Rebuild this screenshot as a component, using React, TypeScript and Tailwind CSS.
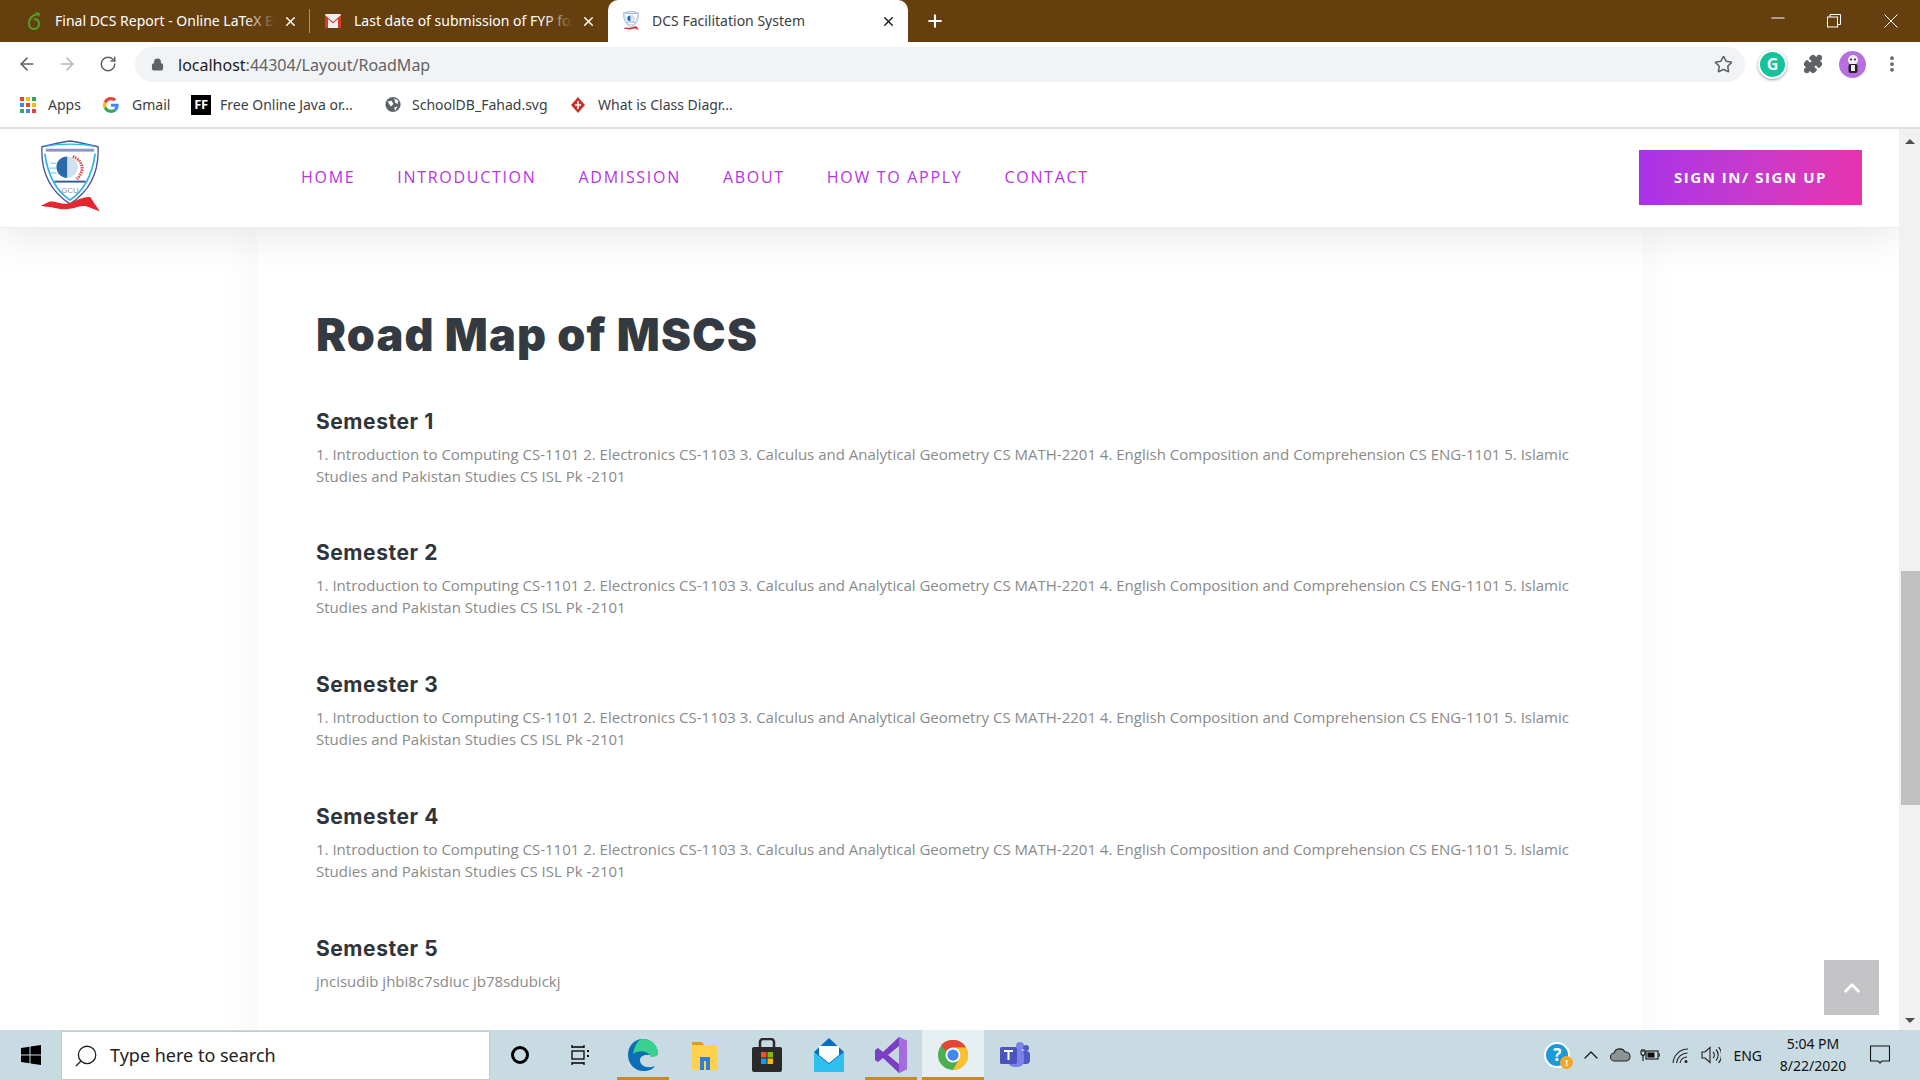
import React from "react";
import { ArrowLeft, ArrowRight, RotateCw, Lock, Star, Puzzle, EllipsisVertical, Plus, X, Search, ChevronUp } from "lucide-react";

const bodyText = "1. Introduction to Computing CS-1101 2. Electronics CS-1103 3. Calculus and Analytical Geometry CS MATH-2201 4. English Composition and Comprehension CS ENG-1101 5. Islamic Studies and Pakistan Studies CS ISL Pk -2101";

const Logo = ({ size = 60 }: { size?: number }) => (
  <svg width={size} height={size * 1.21} viewBox="0 0 62 75" fill="none">
    <path d="M2 7 C14 4 22 2 31 1 C40 2 48 4 60 7 C61 28 56 50 31 66 C6 50 1 28 2 7Z" fill="#fff" stroke="#4a56a0" strokeWidth="1.4" />
    <rect x="6" y="9" width="50" height="3" fill="#6a72ad" opacity="0.75" />
    <path d="M6 6.5 C20 3.5 42 3.5 56 6.5" stroke="#35b3e8" strokeWidth="1.4" />
    <path d="M5 14 C8 36 16 52 31 62 C46 52 54 36 57 14" stroke="#35b3e8" strokeWidth="1.8" />
    <circle cx="28" cy="28" r="11" fill="#cfe0ee" />
    <path d="M28 17 A11 11 0 0 0 28 39Z" fill="#2a6aa8" />
    <path d="M34 17 C46 22 46 34 37 41" stroke="#e34850" strokeWidth="3" strokeDasharray="1.5 1" />
    <path d="M11 24 H17 M10 29 H17 M11 34 H17" stroke="#59c4ee" strokeWidth="1" />
    <path d="M15 43 H47" stroke="#2f5a94" strokeWidth="2" />
    <text x="31" y="55" textAnchor="middle" fontSize="8" fill="#8f8f9f" fontFamily="Liberation Sans, sans-serif">GCU</text>
    <path d="M1 68 L9 64 C16 62 20 68 31 65 C38 63 44 58 52 59 L56 65 L62 74 L52 70 C44 66 40 70 31 71 C20 73 12 68 6 69Z" fill="#e5262c" />
  </svg>
);

const Gmail = () => (
  <svg width="16" height="14" viewBox="0 0 16 14">
    <rect width="16" height="14" rx="1" fill="#eee" />
    <path d="M0 1 L8 8 L16 1 V14 H13 V5 L8 9.5 L3 5 V14 H0Z" fill="#d33b2c" />
  </svg>
);

const GoogleG = () => (
  <svg width="16" height="16" viewBox="0 0 48 48">
    <path fill="#EA4335" d="M24 9.5c3.5 0 6.6 1.2 9.1 3.6l6.8-6.8C35.8 2.4 30.3 0 24 0 14.6 0 6.5 5.4 2.6 13.2l7.9 6.2C12.4 13.6 17.7 9.5 24 9.5z" />
    <path fill="#4285F4" d="M47 24.5c0-1.6-.1-3.1-.4-4.5H24v9h13c-.6 3-2.3 5.5-4.8 7.2l7.7 6c4.5-4.2 7.1-10.3 7.1-17.7z" />
    <path fill="#FBBC05" d="M10.5 28.6A14.5 14.5 0 0 1 10.5 19.4l-7.9-6.2a24 24 0 0 0 0 21.6z" />
    <path fill="#34A853" d="M24 48c6.5 0 11.9-2.1 15.9-5.8l-7.7-6c-2.2 1.4-4.9 2.3-8.2 2.3-6.3 0-11.6-4.1-13.5-9.9l-7.9 6.2C6.5 42.6 14.6 48 24 48z" />
  </svg>
);

const AppsGrid = () => {
  const c = ["#ea4335", "#fbbc05", "#34a853", "#4285f4", "#ea4335", "#fbbc05", "#34a853", "#4285f4", "#ea4335"];
  return (
    <div className="grid grid-cols-3 gap-[2px] w-[16px] h-[16px]">
      {c.map((x, i) => <span key={i} className="w-[4px] h-[4px]" style={{ background: x }} />)}
    </div>
  );
};

const Tab = ({ icon, title, width, iconClass, active, sep }: { icon: React.ReactNode; title: string; width: string; iconClass: string; active?: boolean; sep?: boolean }) => (
  <div className={`${width} h-[42px] flex items-center relative shrink-0 ${active ? "bg-white rounded-t-[10px] text-[#3c4043]" : "text-white"}`}>
    <span className={`w-[16px] ${iconClass} flex justify-center shrink-0`}>{icon}</span>
    <span className="ml-[13px] mt-[-2px] flex-1 whitespace-nowrap overflow-hidden text-[14px] relative">
      {title}
      {!active && <span className="absolute right-0 top-0 bottom-0 w-[30px] bg-gradient-to-r from-transparent to-[#663f0f]" />}
    </span>
    <X size={15} strokeWidth={2.4} className={`ml-[8px] mr-[12px] shrink-0 ${active ? "text-[#222]" : "text-white"}`} />
    {sep && <span className="absolute right-0 top-[9px] h-[24px] w-px bg-[#a8906f]" />}
  </div>
);

const Bookmark = ({ icon, label, width, gap }: { icon: React.ReactNode; label: string; width: string; gap: string }) => (
  <div className={`${width} ${gap} flex items-center text-[14px] text-[#3c4043] shrink-0`}>
    <span className="w-[16px] h-[16px] flex items-center justify-center shrink-0">{icon}</span>
    <span className="whitespace-nowrap">{label}</span>
  </div>
);

const Semester = ({ title, body, className }: { title: string; body: string; className?: string }) => (
  <section className={className}>
    <h3 className="text-[21px] leading-[26px] font-bold text-[#2f353b] [font-family:Inter,sans-serif] tracking-[0.55px]">{title}</h3>
    <p className="mt-[8px] text-[15px] leading-[22px] text-[#8a8a8a] [font-family:'Open_Sans',sans-serif]">{body}</p>
  </section>
);

const TaskIcon = ({ children, active, open }: { children: React.ReactNode; active?: boolean; open?: boolean }) => (
  <div className={`w-[62px] h-[50px] flex items-center justify-center relative shrink-0 ${active ? "bg-[#e6eff1]" : ""}`}>
    {children}
    {open && <span className={`absolute bottom-0 h-[3px] bg-[#c98a2e] ${active ? "left-0 right-0" : "left-[5px] right-[5px]"}`} />}
  </div>
);

export default function App() {
  return (
    <div className="w-[1920px] h-[1080px] overflow-hidden flex flex-col bg-white [font-family:'Noto_Sans',sans-serif]">
      {/* Tabs */}
      <div className="h-[42px] bg-[#663f0f] flex items-center shrink-0">
        <Tab width="w-[310px]" iconClass="ml-[26px]" sep title="Final DCS Report - Online LaTeX Editor" icon={<svg width="14" height="20" viewBox="0 0 14 20" fill="none"><path d="M11 3 C5 4 2 8 2 13 a5 5 0 0 0 10 0 c0-3-2-5-5-5" stroke="#4fa32a" strokeWidth="2" /><path d="M8 1 l5 1 -1 4z" fill="#4fa32a" /></svg>} />
        <Tab width="w-[298px]" iconClass="ml-[15px]" title="Last date of submission of FYP form" icon={<Gmail />} />
        <Tab width="w-[300px]" iconClass="ml-[15px]" active title="DCS Facilitation System" icon={<Logo size={16} />} />
        <Plus size={20} strokeWidth={2.5} className="text-white ml-[17px]" />
        <div className="ml-auto flex items-center text-white">
          <svg width="14" height="14" viewBox="0 0 14 14" stroke="#fff" className="mr-[42px]"><path d="M0.5 4 H13.5" /></svg>
          <svg width="14" height="14" viewBox="0 0 14 14" fill="none" stroke="#fff" className="mr-[43px]"><rect x="0.5" y="3" width="10" height="10" /><path d="M3 3 V0.5 H13.5 V10.5 H10.5" /></svg>
          <svg width="14" height="14" viewBox="0 0 14 14" fill="none" stroke="#fff" className="mr-[22px]"><path d="M0.5 0.5 L13.5 13.5 M13.5 0.5 L0.5 13.5" /></svg>
        </div>
      </div>
      {/* Toolbar */}
      <div className="h-[42px] flex items-center shrink-0 bg-white text-[#5f6368]">
        <ArrowLeft size={20} strokeWidth={2} className="ml-[17px] mt-[2px]" />
        <ArrowRight size={20} strokeWidth={2} className="ml-[20px] mt-[2px] text-[#b8babd]" />
        <RotateCw size={18} strokeWidth={2} className="ml-[22px] mt-[2px]" />
        <div className="ml-[18px] w-[1610px] h-[35px] rounded-full bg-[#f1f3f4] flex items-center mt-[5px] self-start">
          <Lock size={13} strokeWidth={2.5} className="ml-[16px]" fill="#5f6368" />
          <span className="ml-[14px] text-[16px] text-[#202124]">localhost<span className="text-[#5f6368]">:44304/Layout/RoadMap</span></span>
          <Star size={19} strokeWidth={2} className="ml-auto mr-[12px]" />
        </div>
        <div className="ml-[13px] mt-[2px] w-[29px] h-[29px] rounded-full bg-[#15c39a] flex items-center justify-center text-white font-bold text-[16px] border-[2px] border-white shadow-[0_1px_3px_rgba(0,0,0,0.4)]">G</div>
        <Puzzle size={20} strokeWidth={2} fill="#5f6368" className="ml-[16px] mt-[2px]" />
        <div className="ml-[16px] mt-[2px] w-[27px] h-[27px] rounded-full bg-[#b86fe0] flex items-center justify-center">
          <svg width="14" height="20" viewBox="0 0 14 20"><circle cx="7" cy="6" r="5" fill="#eee" /><circle cx="5" cy="5.5" r="1" fill="#222" /><circle cx="9" cy="5.5" r="1" fill="#222" /><rect x="2.5" y="10" width="9" height="9" rx="2" fill="#222" /><rect x="5" y="11" width="4" height="6" fill="#eee" /></svg>
        </div>
        <EllipsisVertical size={20} strokeWidth={2.5} className="ml-[16px] mt-[2px]" />
      </div>
      {/* Bookmarks */}
      <div className="h-[43px] flex items-center shrink-0 bg-white pl-[20px] pb-[2px]">
        <Bookmark width="w-[83px]" gap="gap-[12px]" icon={<AppsGrid />} label="Apps" />
        <Bookmark width="w-[87px]" gap="gap-[13px]" icon={<GoogleG />} label="Gmail" />
        <Bookmark width="w-[195px]" gap="gap-[11px] pl-[3px]" icon={<span className="w-[20px] h-[20px] bg-black text-white text-[13px] tracking-[-0.5px] font-bold flex items-center justify-center shrink-0">FF</span>} label="Free Online Java or..." />
        <Bookmark width="w-[184px]" gap="gap-[11px]" icon={<svg width="19" height="19" viewBox="0 0 19 19"><circle cx="9.5" cy="9.5" r="9" fill="#5f6368" /><path d="M3 6 L8 5 L10 9 L7 12 L5 9Z M11 2 L16 5 L15 9 L12 7Z M11 13 L15 12 L12 17Z" fill="#fff" /></svg>} label="SchoolDB_Fahad.svg" />
        <Bookmark width="w-[180px]" gap="gap-[12px] pl-[1px]" icon={<svg width="14" height="16" viewBox="0 0 14 16"><path d="M7 0 L14 8 L7 16 L0 8Z" fill="#c8322b" /><path d="M4 8 H10 M7 4 V12" stroke="#fff" strokeWidth="1.5" /></svg>} label="What is Class Diagr..." />
      </div>
      <div className="h-[2px] bg-[#dfdfe3] shrink-0" />

      {/* Page */}
      <div className="flex-1 flex min-h-0">
        <main className="flex-1 relative overflow-hidden bg-white">
          <header className="relative z-10 h-[99px] bg-white flex items-center shadow-[0_10px_40px_rgba(0,0,0,0.09)] border-b border-[#eeeeee]">
            <div className="ml-[40px] w-[261px] mt-[-3px]"><Logo /></div>
            <nav className="flex gap-[42px] text-[16px] font-medium tracking-[1.7px] text-[#b535e3] [font-family:'Open_Sans',sans-serif] mt-[-3px]">
              <span>HOME</span><span>INTRODUCTION</span><span>ADMISSION</span><span>ABOUT</span><span>HOW TO APPLY</span><span>CONTACT</span>
            </nav>
            <button className="ml-auto mr-[37px] w-[223px] h-[55px] mt-[-1px] bg-gradient-to-r from-[#a932e8] to-[#e733ae] text-white text-[15px] font-bold tracking-[1.55px] [font-family:'Open_Sans',sans-serif]">SIGN IN/ SIGN UP</button>
          </header>
          <div className="ml-[257px] w-[1386px] bg-white shadow-[0_0_40px_rgba(0,0,0,0.045)] pl-[59px] pr-[60px] pt-[79px] h-[900px]">
            <h1 className="text-[45px] leading-[56px] font-black text-[#343a42] [font-family:Inter,sans-serif] tracking-[1.15px]">Road Map of MSCS</h1>
            <Semester className="mt-[46px]" title="Semester 1" body={bodyText} />
            <Semester className="mt-[53px]" title="Semester 2" body={bodyText} />
            <Semester className="mt-[54px]" title="Semester 3" body={bodyText} />
            <Semester className="mt-[54px]" title="Semester 4" body={bodyText} />
            <Semester className="mt-[54px]" title="Semester 5" body="jncisudib jhbi8c7sdiuc jb78sdubickj" />
          </div>
          <button className="absolute left-[1824px] top-[831px] w-[55px] h-[55px] bg-[#c4c4c6] flex items-center justify-center text-white">
            <ChevronUp size={26} strokeWidth={2.5} />
          </button>
        </main>
        <div className="w-[21px] bg-[#f1f1f1] flex flex-col items-center shrink-0 relative">
          <span className="mt-[10px] w-0 h-0 border-x-[5px] border-x-transparent border-b-[5px] border-b-[#505050]" />
          <div className="absolute top-[442px] left-[2px] right-0 h-[234px] bg-[#c1c1c1]" />
          <span className="mt-auto mb-[7px] w-0 h-0 border-x-[5px] border-x-transparent border-t-[5px] border-t-[#505050]" />
        </div>
      </div>

      {/* Taskbar */}
      <div className="h-[50px] bg-[#c9dbe2] flex items-center shrink-0 relative">
        <div className="w-[61px] flex justify-center">
          <svg width="20" height="20" viewBox="0 0 20 20" fill="#000"><path d="M0 3 L8.5 1.8 V9.5 H0Z M9.5 1.6 L20 0 V9.5 H9.5Z M0 10.5 H8.5 V18.2 L0 17Z M9.5 10.5 H20 V20 L9.5 18.4Z" /></svg>
        </div>
        <div className="w-[429px] h-[49px] mt-[1px] bg-white border border-[#c8c8c8] flex items-center text-[18px] text-[#222] shrink-0">
          <Search size={26} strokeWidth={1.2} className="ml-[11px] -scale-x-100" />
          <span className="ml-[11px] [font-family:'Noto_Sans',sans-serif]">Type here to search</span>
        </div>
        <div className="w-[60px] flex justify-center"><span className="w-[18px] h-[18px] rounded-full border-[3px] border-black" /></div>
        <div className="w-[60px] flex justify-center">
          <svg width="20" height="20" viewBox="0 0 20 20" fill="none" stroke="#000" strokeWidth="1.3"><rect x="2" y="6" width="12" height="8" /><path d="M2 2 H14 M2 18 H14 M2 0 V3 M14 0 V3 M2 17 V20 M14 17 V20" /><path d="M18 5 V7 M18 10 V12" strokeWidth="2" /></svg>
        </div>
        <div className="flex ml-[2px]">
          <TaskIcon open><svg width="32" height="34" viewBox="0 0 32 34"><path d="M16 1 C7 1 1 8 1 17 c0 9 7 16 15 16 c6 0 10-2 12-5 c-8 3-15 0-15-6 c0-3 3-5 7-5 h11 C31 8 25 1 16 1z" fill="#0c6fb5" /><path d="M16 1 c8 0 15 6 15 14 c0 3-3 4-7 4 c-2-6-12-8-18-3 C8 7 11 1 16 1z" fill="#3ad18e" /></svg></TaskIcon>
          <TaskIcon><svg width="28" height="30" viewBox="0 0 28 30"><path d="M1 2 h10 l2 3 h-12z" fill="#e39a1b" /><rect x="1" y="5" width="26" height="25" fill="#ffd24d" /><path d="M9 30 V17 H19 V30 H15 V21 H13 V30Z" fill="#2f7fd6" /></svg></TaskIcon>
          <TaskIcon><svg width="30" height="34" viewBox="0 0 30 34"><rect x="0" y="9" width="30" height="25" rx="2" fill="#2a2a2a" /><path d="M8 10 V4 a3 3 0 0 1 3-3 h8 a3 3 0 0 1 3 3 V10" stroke="#2a2a2a" strokeWidth="2.5" fill="none" /><rect x="9" y="14" width="5.5" height="5.5" fill="#f25022" /><rect x="15.5" y="14" width="5.5" height="5.5" fill="#7fba00" /><rect x="9" y="20.5" width="5.5" height="5.5" fill="#00a4ef" /><rect x="15.5" y="20.5" width="5.5" height="5.5" fill="#ffb900" /></svg></TaskIcon>
          <TaskIcon><svg width="32" height="34" viewBox="0 0 32 34"><path d="M1 14 L16 0 L31 14 V34 H1Z" fill="#0a6ec4" /><path d="M6 8 H26 V17 L16 25 L6 17Z" fill="#fff" /><path d="M1 14 L16 26 L31 14 V34 H1Z" fill="#2fc0f0" /></svg></TaskIcon>
          <TaskIcon open><svg width="32" height="36" viewBox="0 0 32 36"><path d="M24 0 L32 4 V32 L24 36 L8 21 L3 25 L0 23 V13 L3 11 L8 15Z" fill="#7a3fc4" /><path d="M24 9 V27 L13 18Z" fill="#c9d8e0" /><path d="M24 0 L32 4 V32 L24 36Z" fill="#a56ce0" /></svg></TaskIcon>
          <TaskIcon active open><svg width="30" height="30" viewBox="0 0 48 48"><circle cx="24" cy="24" r="24" fill="#4caf50" /><path d="M24 0 A24 24 0 0 1 45 12 H24 A12 12 0 0 0 13 18 L5 8 A24 24 0 0 1 24 0Z" fill="#ea4335" /><path d="M45 12 A24 24 0 0 1 24 48 L34 30 A12 12 0 0 0 24 12Z" fill="#fbc02d" /><circle cx="24" cy="24" r="12" fill="#fff" /><circle cx="24" cy="24" r="9" fill="#4285f4" /></svg></TaskIcon>
          <TaskIcon><svg width="30" height="28" viewBox="0 0 30 28"><circle cx="20" cy="5" r="4" fill="#7b83eb" /><circle cx="26" cy="7" r="3" fill="#5059c9" /><rect x="18" y="10" width="12" height="13" rx="4" fill="#5059c9" /><rect x="8" y="8" width="16" height="18" rx="6" fill="#7b83eb" /><rect x="0" y="6" width="17" height="17" rx="1.5" fill="#4b53bc" /><path d="M4 10 H13 M8.5 10 V19" stroke="#fff" strokeWidth="2" /></svg></TaskIcon>
        </div>
        <div className="ml-auto flex items-center text-[#111]">
          <div className="relative w-[26px] h-[26px] rounded-full bg-[#1a9ad8] border-[2px] border-white flex items-center justify-center text-white font-bold text-[17px]">?
            <span className="absolute right-[-5px] bottom-[-3px] w-[13px] h-[13px] rounded-full bg-[#f5a623] text-[9px] flex items-center justify-center">!</span>
          </div>
          <ChevronUp size={24} strokeWidth={1.2} className="ml-[9px]" />
          <svg width="21" height="14" viewBox="0 0 21 14" className="ml-[7px]"><path d="M5 13 a4 4 0 0 1 -1 -8 a6 6 0 0 1 11 -1 a4.5 4.5 0 0 1 1 9Z" fill="#8d9498" stroke="#222" strokeWidth="1.1" /></svg>
          <svg width="20" height="14" viewBox="0 0 20 14" fill="none" stroke="#111" strokeWidth="1.1" className="ml-[9px]"><rect x="6" y="3" width="12" height="8" /><rect x="8" y="5" width="6" height="4" fill="#111" /><path d="M18.5 6 H20 V8 H18.5 M2 1 V3 M4 1 V3 M1 3 H5 V6 L3 8 L1 6Z M3 8 V13" /></svg>
          <svg width="18" height="17" viewBox="0 0 18 17" fill="none" stroke="#222" strokeWidth="1.1" className="ml-[12px]"><path d="M1 16 A15 15 0 0 1 16 2 M4.5 16 A11 11 0 0 1 15.5 6 M8 16 A7 7 0 0 1 15 10" /><circle cx="14" cy="14.5" r="1.5" fill="#222" stroke="none" /></svg>
          <svg width="20" height="18" viewBox="0 0 20 18" fill="none" stroke="#222" strokeWidth="1.1" className="ml-[11px]"><path d="M1 6 H4 L9 1.5 V16.5 L4 12 H1Z M12 6 A4 4 0 0 1 12 12 M15 3.5 A8 8 0 0 1 15 14.5 M17.5 1 A12 12 0 0 1 17.5 17" /></svg>
          <span className="ml-[12px] text-[14px]">ENG</span>
          <div className="ml-[15px] w-[72px] flex flex-col items-center text-[14px] leading-[22px]">
            <span>5:04 PM</span><span>8/22/2020</span>
          </div>
          <svg width="20" height="20" viewBox="0 0 20 20" fill="none" stroke="#111" strokeWidth="1.1" className="ml-[21px] mr-[30px]"><path d="M0.5 1 H19.5 V16 H12 L10 18 L8 16 H0.5Z" /></svg>
        </div>
      </div>
    </div>
  );
}
